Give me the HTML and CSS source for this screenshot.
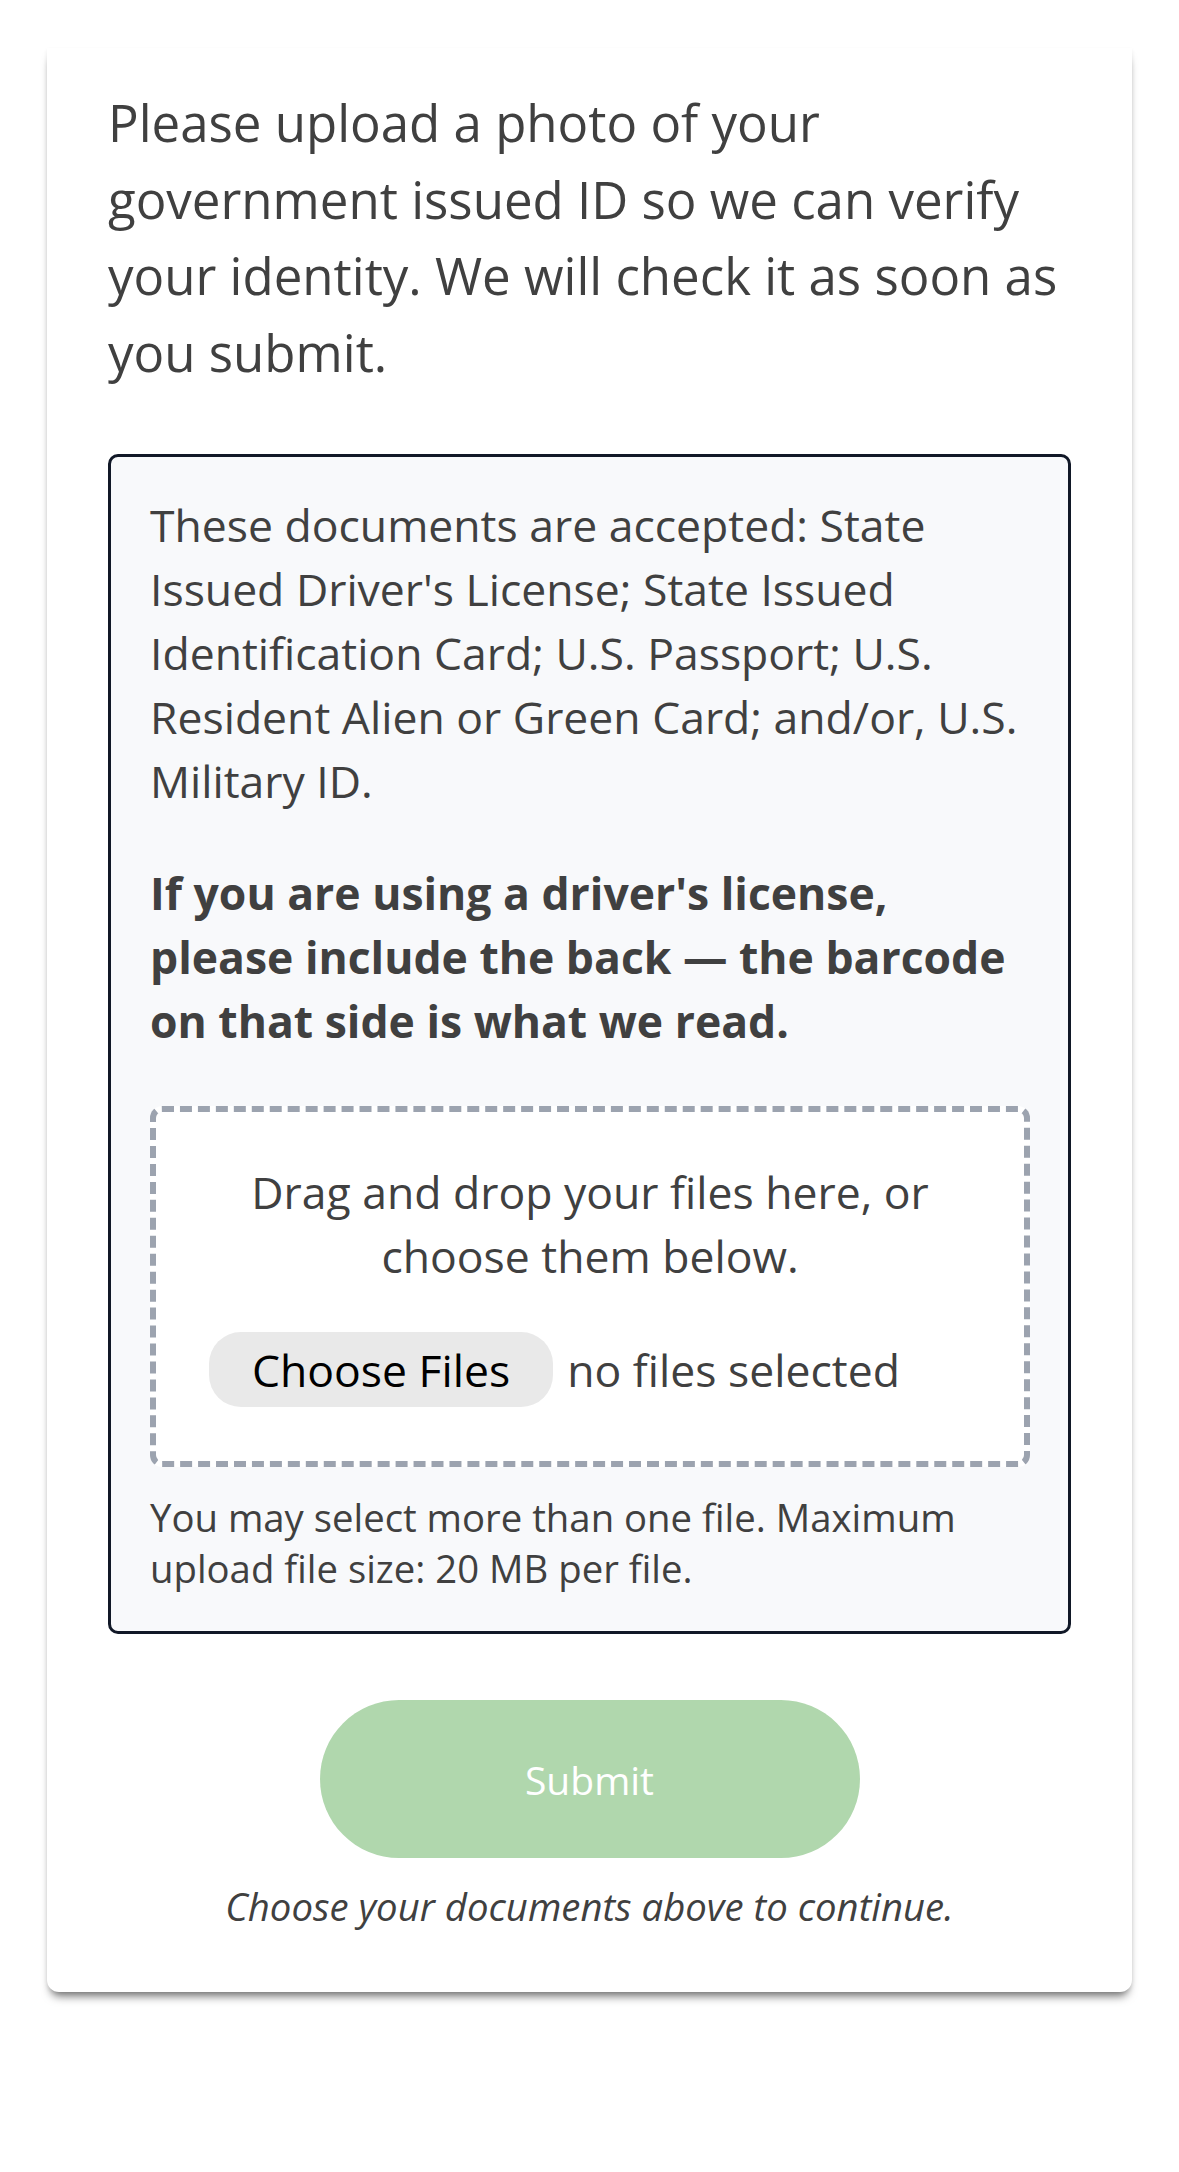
FILE: index.html
```html
<!DOCTYPE html>
<html lang="en">
<head>
<meta charset="utf-8">
<title>Upload ID</title>
<link rel="stylesheet" href="styles.css">
</head>
<body>
<main class="card">
  <p class="intro">Please upload a photo of your government issued ID so we can verify your identity. We will check it as soon as you submit.</p>
  <section class="docs">
    <p class="docs-text">These documents are accepted: State Issued Driver's License; State Issued Identification Card; U.S. Passport; U.S. Resident Alien or Green Card; and/or, U.S. Military ID.</p>
    <p class="docs-bold">If you are using a driver's license, please include the back — the barcode on that side is what we read.</p>
    <div class="dropzone">
      <p class="drop-text">Drag and drop your files here, or choose them below.</p>
      <div class="file-row">
        <label class="file-btn">Choose Files</label>
        <span class="file-status">no files selected</span>
      </div>
    </div>
    <p class="hint">You may select more than one file. Maximum upload file size: 20 MB per file.</p>
  </section>
  <div class="actions">
    <button class="submit" type="button" disabled>Submit</button>
  </div>
  <p class="note">Choose your documents above to continue.</p>
</main>
</body>
</html>
```

FILE: styles.css
```css
* { box-sizing: border-box; }

html, body {
  margin: 0;
  padding: 0;
  background: #ffffff;
}

body {
  font-family: "Open Sans", "Noto Sans", sans-serif;
  color: #404040;
  padding-top: 48px;
  padding-bottom: 40px;
}

.card {
  margin: 0 47px;
  background: #ffffff;
  border-radius: 0 0 12px 12px;
  padding: 36px 61px 60px;
  box-shadow: 0 8px 10px -4px rgba(0, 0, 0, 0.55), 0 2px 4px rgba(0, 0, 0, 0.07);
}

.intro {
  margin: 0 0 64px;
  font-size: 51px;
  line-height: 76.5px;
}

.docs {
  border: 3px solid #111827;
  border-radius: 10px;
  background: #f8f9fb;
  padding: 36px 38px 37px 39px;
}

.docs-text,
.docs-bold {
  margin: 0;
  font-size: 44.5px;
  line-height: 64px;
}

.docs-text { margin-bottom: 48px; }

.docs-bold {
  font-weight: 700;
  margin-bottom: 53px;
}

.dropzone {
  border: 6px dashed #9ca3af;
  border-radius: 12px;
  background: #ffffff;
  padding: 48px 53px 54px;
}

.drop-text {
  margin: 0;
  text-align: center;
  font-size: 44.5px;
  line-height: 64px;
}

.file-row {
  display: flex;
  align-items: center;
  margin-top: 44px;
  font-size: 44.5px;
}

.file-btn {
  display: flex;
  align-items: center;
  height: 75px;
  padding: 0 43px;
  border-radius: 32px;
  background: #e9e9e9;
  color: #000000;
}

.file-status {
  margin-left: 14px;
  color: #404040;
}

.hint {
  margin: 25px 0 0;
  font-size: 38.3px;
  line-height: 51px;
}

.actions {
  display: flex;
  justify-content: center;
  margin-top: 66px;
}

.submit {
  width: 540px;
  height: 158px;
  border: none;
  border-radius: 79px;
  background: #b0d7ad;
  color: #ffffff;
  font-family: "Open Sans", "Noto Sans", sans-serif;
  font-size: 39px;
  padding: 0;
}

.note {
  margin: 23px 0 0;
  text-align: center;
  font-style: italic;
  font-size: 38.3px;
  line-height: 51px;
}
```
